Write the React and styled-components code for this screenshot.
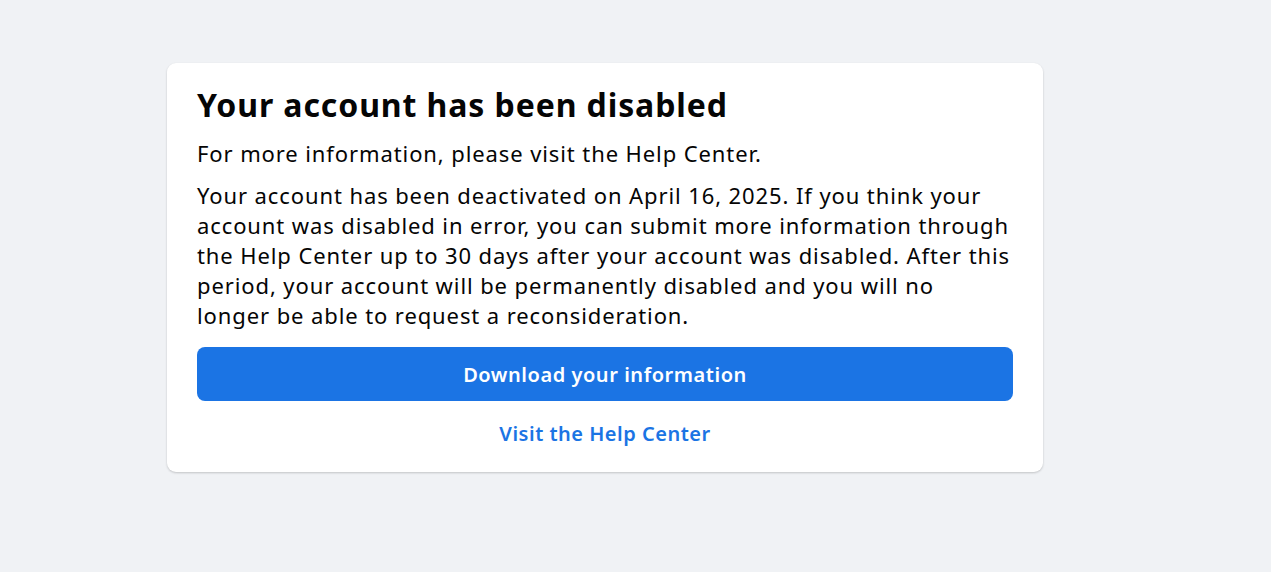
import React from "react"
import styled, { createGlobalStyle } from "styled-components"

const GlobalStyle = createGlobalStyle`
  html, body {
    margin: 0;
    padding: 0;
    background: #f0f2f5;
  }
  body {
    font-family: "Noto Sans", "Open Sans", "Liberation Sans", sans-serif;
    color: #050505;
  }
`

const Page = styled.div`
  min-height: 572px;
  padding: 63px 0 0 167px;
  box-sizing: border-box;
`

const Card = styled.section`
  width: 876px;
  box-sizing: border-box;
  background: #fff;
  border-radius: 9px;
  box-shadow: 0 1px 2px rgba(0, 0, 0, 0.12), 0 1px 3px rgba(0, 0, 0, 0.08);
  padding: 22px 30px 23px;
  display: flex;
  flex-direction: column;
`

const Title = styled.h1`
  margin: 0;
  font-size: 32px;
  line-height: 40px;
  font-weight: 700;
  letter-spacing: 0.9px;
  color: #050505;
`

const Text = styled.p`
  margin: ${(p) => p.$top || 0}px 0 0;
  font-size: 22px;
  line-height: 30px;
  letter-spacing: 0.9px;
  color: #050505;
  white-space: nowrap;
`

const PrimaryButton = styled.button`
  margin-top: 17px;
  height: 54px;
  border: 0;
  border-radius: 8px;
  background: #1b74e4;
  color: #fff;
  font-family: inherit;
  font-size: 20px;
  font-weight: 600;
  letter-spacing: 0.55px;
  cursor: pointer;
`

const HelpLink = styled.a`
  margin-top: 18px;
  align-self: center;
  font-size: 20px;
  line-height: 30px;
  font-weight: 600;
  letter-spacing: 0.5px;
  color: #1b74e4;
  text-decoration: none;
`

export default function App() {
  return (
    <>
      <GlobalStyle />
      <Page>
        <Card>
          <Title>Your account has been disabled</Title>
          <Text $top={13}>For more information, please visit the Help Center.</Text>
          <Text $top={12}>
            Your account has been deactivated on April 16, 2025. If you think your
            <br />
            account was disabled in error, you can submit more information through
            <br />
            the Help Center up to 30 days after your account was disabled. After this
            <br />
            period, your account will be permanently disabled and you will no
            <br />
            longer be able to request a reconsideration.
          </Text>
          <PrimaryButton>Download your information</PrimaryButton>
          <HelpLink href="#">Visit the Help Center</HelpLink>
        </Card>
      </Page>
    </>
  )
}
